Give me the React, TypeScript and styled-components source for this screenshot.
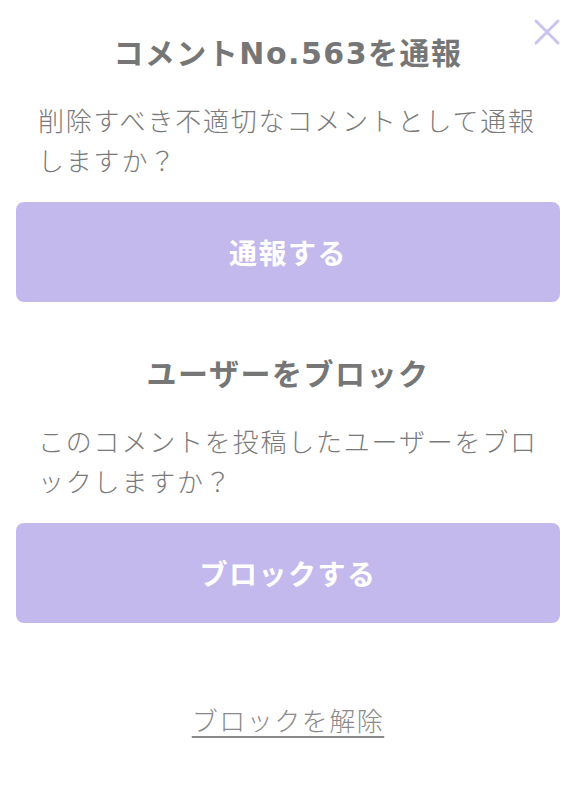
import styled, { createGlobalStyle } from 'styled-components';

const GlobalStyle = createGlobalStyle`
  html, body {
    margin: 0;
    padding: 0;
    background: #fff;
  }
  body {
    font-family: "Noto Sans CJK JP", "Noto Sans", sans-serif;
  }
`;

const Sheet = styled.div`
  position: relative;
  width: 586px;
  min-height: 791px;
  box-sizing: border-box;
  padding: 33px 26px 0 16px;
  display: flex;
  flex-direction: column;
  color: #777;
`;

const CloseButton = styled.button`
  position: absolute;
  top: 17px;
  right: 24px;
  width: 30px;
  height: 30px;
  padding: 0;
  border: none;
  background: none;
  cursor: pointer;
`;

const Section = styled.section<{ $gap?: number }>`
  display: flex;
  flex-direction: column;
  margin-top: ${(p) => p.$gap ?? 0}px;
`;

const Title = styled.h2`
  margin: 0;
  font-family: "DejaVu Sans", "Noto Sans CJK JP", sans-serif;
  font-size: 30px;
  line-height: 42px;
  font-weight: 700;
  letter-spacing: 1.5px;
  text-align: center;
  color: #767676;
`;

const Message = styled.p`
  margin: 25px 0 0;
  padding: 0 6px 0 22px;
  font-size: 26px;
  font-weight: 300;
  line-height: 40px;
  letter-spacing: 1.8px;
  color: #7a7a7a;
  line-break: loose;
`;

const ActionButton = styled.button`
  margin-top: 22px;
  width: 544px;
  height: 100px;
  border: none;
  border-radius: 8px;
  background: #c4b9ec;
  color: #fff;
  font-family: inherit;
  font-size: 28px;
  font-weight: 700;
  letter-spacing: 1.5px;
  cursor: pointer;
`;

const UnblockLink = styled.a`
  margin-top: 77px;
  align-self: center;
  font-size: 26px;
  font-weight: 300;
  line-height: 40px;
  letter-spacing: 1.5px;
  color: #8a8a8a;
  text-decoration: underline;
  text-underline-offset: 5px;
  cursor: pointer;
`;

export default function App() {
  return (
    <>
      <GlobalStyle />
      <Sheet>
        <CloseButton aria-label="閉じる">
          <svg width="30" height="30" viewBox="0 0 30 30">
            <path d="M4 4 L26 26 M26 4 L4 26" stroke="#c9c4ee" strokeWidth="3" strokeLinecap="round" />
          </svg>
        </CloseButton>
        <Section>
          <Title>コメントNo.563を通報</Title>
          <Message>削除すべき不適切なコメントとして通報しますか？</Message>
          <ActionButton>通報する</ActionButton>
        </Section>
        <Section $gap={52}>
          <Title>ユーザーをブロック</Title>
          <Message>このコメントを投稿したユーザーをブロックしますか？</Message>
          <ActionButton>ブロックする</ActionButton>
        </Section>
        <UnblockLink>ブロックを解除</UnblockLink>
      </Sheet>
    </>
  );
}
